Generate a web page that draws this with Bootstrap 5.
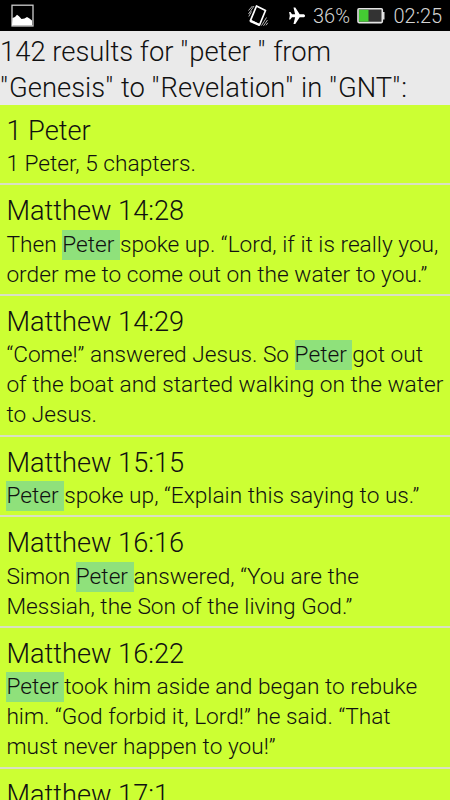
<!DOCTYPE html>
<html lang="en">
<head>
<meta charset="utf-8">
<meta name="viewport" content="width=device-width, initial-scale=1">
<title>Search results</title>
<link href="https://cdn.jsdelivr.net/npm/bootstrap@5.3.0/dist/css/bootstrap.min.css" rel="stylesheet">
<style>
body{font-family:Roboto,"Liberation Sans",sans-serif;font-weight:300;color:#111;background:#cf3;height:800px}
.status-bar{height:31px;background:#000;color:#d4d4d4;font-size:20px;line-height:31px}
.plane{margin-left:17px}
.charge{margin-left:7px;width:39px;padding-top:1px}
.battery{margin-left:5px}
.clock{margin-left:6.5px;width:56.5px;padding-top:1px}
.summary{height:74px;background:#eaeaea;font-size:27.4px;line-height:36px;padding-top:2.6px}
.quote{letter-spacing:1.2px}
.results{--bs-list-group-bg:#cf3;--bs-list-group-color:#111}
.results .result{padding:9.2px 6.4px 0;border:0;border-bottom:2px solid #d9e0c4;height:110.7px}
.results .one-line{height:80.5px}
.results .one-line:first-child{height:80.2px;padding-top:8.6px}
.results .three-line{height:140.8px}
.result h2{font-size:27.2px;line-height:35.2px;font-weight:300;margin:0}
.result p{font-size:22.7px;line-height:30.1px;margin:0}
.hit{background:#8fe17b;display:inline-block;height:30px;vertical-align:top}
</style>
<script src="https://cdn.jsdelivr.net/npm/bootstrap@5.3.0/dist/js/bootstrap.bundle.min.js"></script>
</head>
<body class="overflow-hidden text-nowrap">
<header class="status-bar d-flex align-items-center">
  <svg class="ms-2 me-auto" width="30" height="31" viewBox="0 0 30 31"><rect x="4" y="5.200" width="21" height="20.800" fill="#000" stroke="#ccc" stroke-width="1.300"/><path d="M4.500 18 7 17l2-2.300 2 1.500 2.500 2.800 3-.5 2.500-1.600 2.500 1.500 2.500 2V25.500h-20z" fill="#fff"/></svg>
  <svg width="24" height="31" viewBox="0 0 24 31"><g fill="none" stroke="#fff"><path d="M8.500 6 17.500 10.500 11.500 25 2.300 20.800z" stroke-width="1.700" stroke-linejoin="round"/><path d="M2.300 20.800 11.500 25" stroke-width="2.400"/><path d="M.5 10.500 4.500 6M.5 14 6 6M.8 16.500 3.500 11.500M13.500 25.500 18.500 17.500M15.500 25.800 19.500 20M18 25.300 19.800 22.800" stroke-width=".9" stroke="#ccc"/></g></svg>
  <svg class="plane" width="17" height="31" viewBox="0 0 17 31"><path d="M16 15.700c0-1-.8-1.500-2-1.500h-3.300L6.300 7.500H4.500l1.600 6.700H3L1.500 12H.1L.8 15.700.1 19.500h1.200l1.700-2.300h3.100L4.500 24h1.800l4.400-6.800H14c1.200 0 2-.5 2-1.500z" fill="#fff"/></svg>
  <span class="charge">36%</span>
  <svg class="battery" width="30" height="31" viewBox="0 0 30 31"><rect x="1" y="8.800" width="24.300" height="13.800" rx="1" fill="#333" stroke="#e5e5e5" stroke-width="1.600"/><rect x="2" y="9.800" width="9.500" height="11.800" fill="#4c3"/><path d="M26 12h1.500v7.500H26z" fill="#ddd"/></svg>
  <span class="clock">02:25</span>
</header>
<div class="summary">142 results for <span class="quote">"</span>peter <span class="quote">"</span> from<br><span class="quote">"</span>Genesis<span class="quote">"</span> to <span class="quote">"</span>Revelation<span class="quote">"</span> in <span class="quote">"</span>GNT<span class="quote">"</span>:</div>
<main class="results list-group list-group-flush">
  <article class="result one-line list-group-item"><h2>1 Peter</h2><p>1 Peter, 5 chapters.</p></article>
  <article class="result list-group-item"><h2>Matthew 14:28</h2><p>Then <span class="hit">Peter&nbsp;</span>spoke up. “Lord, if it is really you,<br>order me to come out on the water to you.”</p></article>
  <article class="result three-line list-group-item"><h2>Matthew 14:29</h2><p>“Come!” answered Jesus. So <span class="hit">Peter&nbsp;</span>got out<br>of the boat and started walking on the water<br>to Jesus.</p></article>
  <article class="result one-line list-group-item"><h2>Matthew 15:15</h2><p><span class="hit">Peter&nbsp;</span>spoke up, “Explain this saying to us.”</p></article>
  <article class="result list-group-item"><h2>Matthew 16:16</h2><p>Simon <span class="hit">Peter&nbsp;</span>answered, “You are the<br>Messiah, the Son of the living God.”</p></article>
  <article class="result three-line list-group-item"><h2>Matthew 16:22</h2><p><span class="hit">Peter&nbsp;</span>took him aside and began to rebuke<br>him. “God forbid it, Lord!” he said. “That<br>must never happen to you!”</p></article>
  <article class="result list-group-item"><h2>Matthew 17:1</h2></article>
</main>
</body>
</html>
